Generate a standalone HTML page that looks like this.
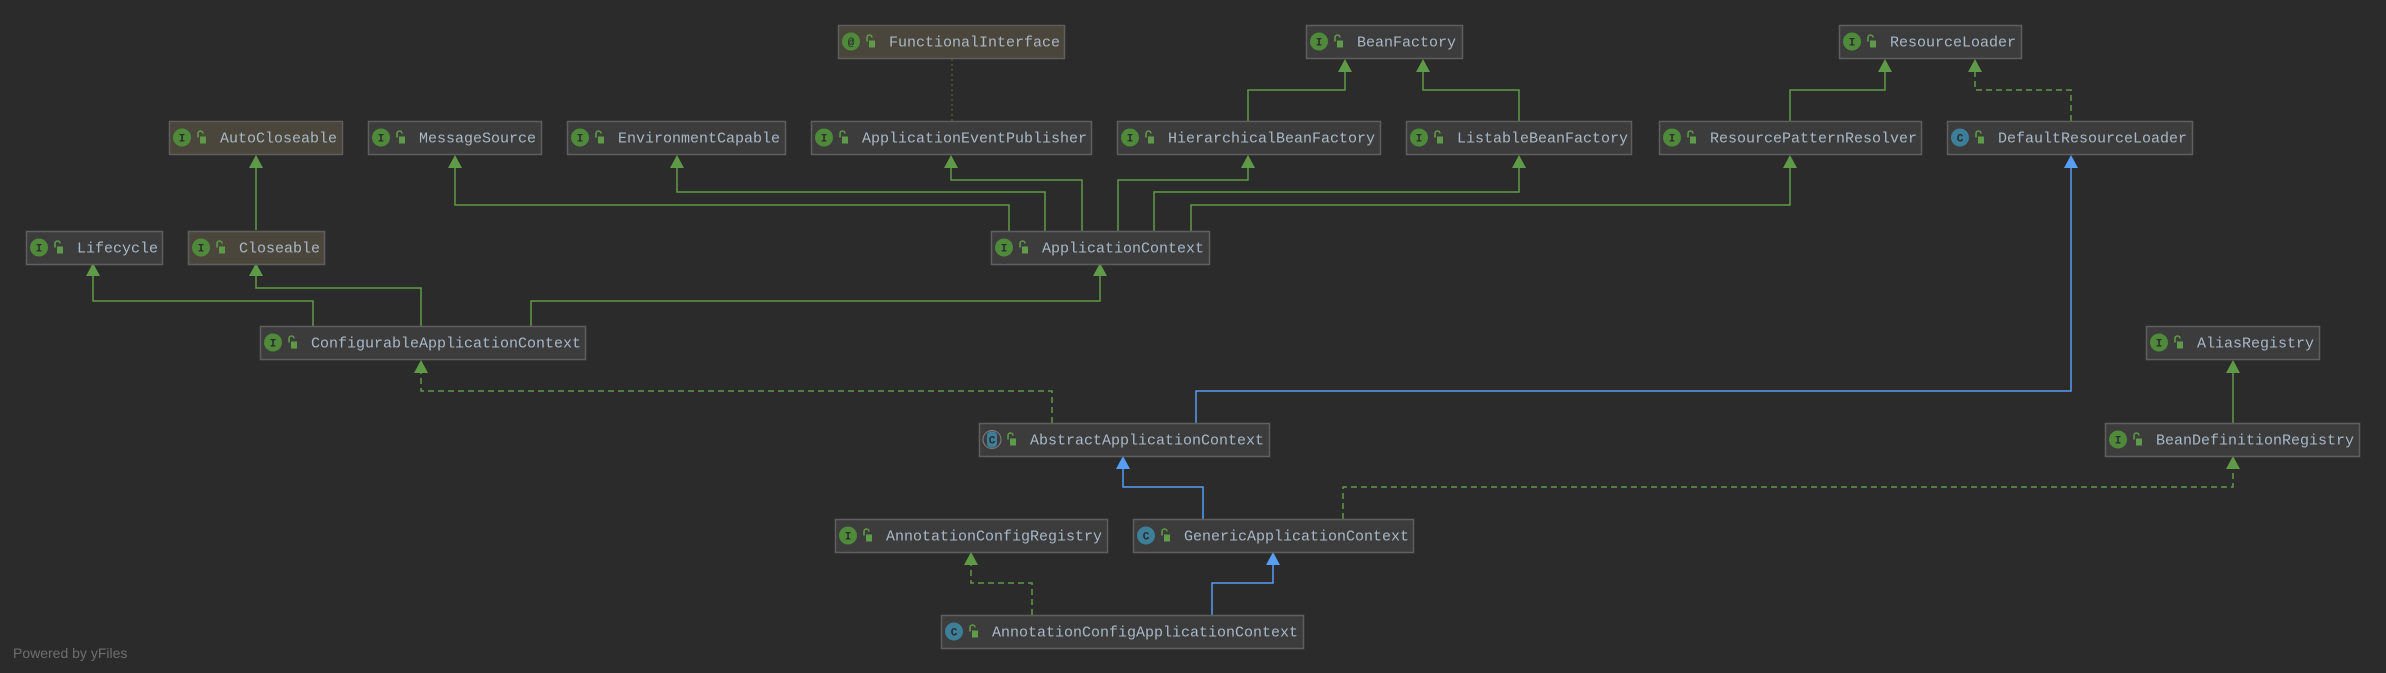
<!DOCTYPE html>
<html><head><meta charset="utf-8"><style>
html,body{margin:0;padding:0;background:#2b2b2b;width:2386px;height:673px;overflow:hidden}
svg{display:block}
text{font-family:"Liberation Mono",monospace;font-size:15px;fill:#a9b7c6}
</style></head><body>
<svg width="2386" height="673" viewBox="0 0 2386 673" xmlns="http://www.w3.org/2000/svg">
<defs>
<marker id="ag" markerWidth="16" markerHeight="14" refX="8" refY="1" orient="auto" markerUnits="userSpaceOnUse" viewBox="0 0 16 14"><path d="M8,1 L15,14 L1,14 Z" fill="#5f9a48"/></marker>
</defs>
<g fill="none" stroke-width="1.5">
<!-- green solid -->
<g stroke="#5f9a48">
<path d="M256,230 V158"/>
<path d="M313,326 V301 H93 V266"/>
<path d="M421,326 V288 H256 V266"/>
<path d="M531,326 V301 H1100 V266"/>
<path d="M1009,231 V205 H455 V158"/>
<path d="M1045,231 V192 H677 V158"/>
<path d="M1082,231 V180 H951 V158"/>
<path d="M1118,231 V180 H1248 V158"/>
<path d="M1154,231 V192 H1519 V158"/>
<path d="M1191,231 V205 H1790 V158"/>
<path d="M1248,121 V90 H1345 V62"/>
<path d="M1519,121 V90 H1423 V62"/>
<path d="M1790,121 V90 H1885 V62"/>
<path d="M2233,423 V363"/>
</g>
<g stroke="#5f9a48" stroke-dasharray="6,4">
<path d="M2071,121 V90 H1975 V62"/>
<path d="M1052,423 V391 H421 V363"/>
<path d="M1343,519 V487 H2233 V459"/>
<path d="M1032,615 V583 H971 V555"/>
</g>
<path d="M952,59 V121" stroke="#6b6b3a" stroke-dasharray="2,3" stroke-width="1"/>
<g stroke="#589df6">
<path d="M1196,423 V391 H2071 V158"/>
<path d="M1203,519 V487 H1123 V459"/>
<path d="M1212,615 V583 H1273 V555"/>
</g>
</g>
<g fill="#5f9a48">
<path d="M256,155 l7,13 h-14z"/><path d="M93,263 l7,13 h-14z"/><path d="M256,263 l7,13 h-14z"/>
<path d="M1100,263 l7,13 h-14z"/><path d="M455,155 l7,13 h-14z"/><path d="M677,155 l7,13 h-14z"/>
<path d="M951,155 l7,13 h-14z"/><path d="M1248,155 l7,13 h-14z"/><path d="M1519,155 l7,13 h-14z"/>
<path d="M1790,155 l7,13 h-14z"/><path d="M1345,59 l7,13 h-14z"/><path d="M1423,59 l7,13 h-14z"/>
<path d="M1885,59 l7,13 h-14z"/><path d="M1975,59 l7,13 h-14z"/><path d="M2233,360 l7,13 h-14z"/>
<path d="M421,360 l7,13 h-14z"/><path d="M2233,456 l7,13 h-14z"/><path d="M971,552 l7,13 h-14z"/>
</g>
<g fill="#589df6">
<path d="M2071,155 l7,13 h-14z"/><path d="M1123,456 l7,13 h-14z"/><path d="M1273,552 l7,13 h-14z"/>
</g>
<!-- boxes -->
<g id="boxes">
</g>
<script>
var B=[
["FunctionalInterface",838,25,1064,"@",1],
["BeanFactory",1306,25,1462,"I",0],
["ResourceLoader",1839,25,2021,"I",0],
["AutoCloseable",169,121,342,"I",1],
["MessageSource",368,121,541,"I",0],
["EnvironmentCapable",567,121,785,"I",0],
["ApplicationEventPublisher",811,121,1091,"I",0],
["HierarchicalBeanFactory",1117,121,1380,"I",0],
["ListableBeanFactory",1406,121,1631,"I",0],
["ResourcePatternResolver",1659,121,1921,"I",0],
["DefaultResourceLoader",1947,121,2192,"C",0],
["Lifecycle",26,231,162,"I",0],
["Closeable",188,231,324,"I",1],
["ApplicationContext",991,231,1209,"I",0],
["ConfigurableApplicationContext",260,326,585,"I",0],
["AliasRegistry",2146,326,2319,"I",0],
["AbstractApplicationContext",979,423,1269,"A",0],
["BeanDefinitionRegistry",2105,423,2359,"I",0],
["AnnotationConfigRegistry",835,519,1107,"I",0],
["GenericApplicationContext",1133,519,1413,"C",0],
["AnnotationConfigApplicationContext",941,615,1303,"C",0]];
var ns="http://www.w3.org/2000/svg",g=document.getElementById("boxes");
function el(t,a,p){var e=document.createElementNS(ns,t);for(var k in a)e.setAttribute(k,a[k]);(p||g).appendChild(e);return e;}
B.forEach(function(b){
 var x=b[1],y=b[2],w=b[3]-b[1],h=33,cy=y+h/2;
 el("rect",{x:x+.5,y:y+.5,width:w,height:h,fill:b[5]?"#4a463b":"#3c3c3c",stroke:"#5e5e5e","stroke-width":1.5});
 var cx=x+13, col=(b[4]=="C"||b[4]=="A")?"#3d7f99":"#4f8a3a";
 if(b[4]=="A"){el("circle",{cx:cx,cy:cy,r:9,fill:"none",stroke:"#777","stroke-width":1.2});el("rect",{x:cx-5,y:cy-8,width:10,height:16,rx:4,fill:col});}
 else el("circle",{cx:cx,cy:cy,r:9,fill:col});
 var t=el("text",{x:cx,y:cy+4,"text-anchor":"middle",style:"font-size:11px;fill:#2b2b2b;font-weight:bold"});t.textContent=(b[4]=="A")?"C":b[4];
 el("path",{d:"M"+(x+29)+","+(cy)+" v-4 a2.5,2.5 0 0 1 5,0",fill:"none",stroke:"#5f9a48","stroke-width":1.6});
 el("rect",{x:x+31,y:cy-1,width:6,height:7,fill:"#5f9a48"});
 var tt=el("text",{x:x+51,y:cy+5});tt.textContent=b[0];
});
</script>
<text x="13" y="658" style="font-family:'Liberation Sans',sans-serif;font-size:14px;fill:#6e6e6e">Powered by yFiles</text>
</svg>
</body></html>
